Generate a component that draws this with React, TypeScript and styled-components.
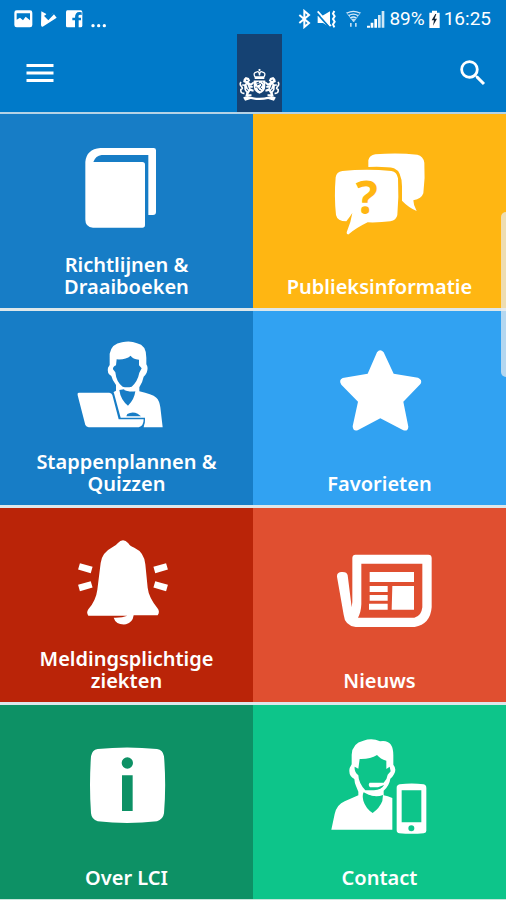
import React from "react";
import styled, { createGlobalStyle } from "styled-components";
import { MdMenu, MdSearch } from "react-icons/md";

const GlobalStyle = createGlobalStyle`
  * { box-sizing: border-box; }
  body { margin: 0; background: #dde7ea; }
`;

const Screen = styled.div`
  position: relative;
  min-height: 100vh;
  display: flex;
  flex-direction: column;
  font-family: "Noto Sans", "Open Sans", sans-serif;
  color: #fff;
`;

const TopArea = styled.header`
  background: #007ac9;
  border-bottom: 2px solid #b5d3e6;
`;

const StatusBar = styled.div`
  height: 34px;
  padding: 4px 15px 0 14px;
  display: flex;
  align-items: center;
  justify-content: space-between;
  font: 19px/24px Roboto, sans-serif;
`;

const StatusGroup = styled.div<{ $gap: number }>`
  display: flex;
  align-items: center;
  gap: ${(p) => p.$gap}px;
`;

const Toolbar = styled.div`
  display: grid;
  grid-template-columns: 1fr auto 1fr;
  padding: 0 16px 0 22px;
`;

const ToolButton = styled.button<{ $side: "start" | "end" }>`
  justify-self: ${(p) => p.$side};
  align-self: center;
  display: flex;
  padding: 0;
  border: 0;
  background: none;
  color: #fff;
  cursor: pointer;
`;

const Emblem = styled.div`
  display: flex;
  align-items: flex-end;
  padding: 0 2px 10px;
  height: 78px;
  margin-left: 6px;
  background: #154273;
`;

const Tiles = styled.main`
  flex: 1;
  display: grid;
  grid-template-columns: 1fr 1fr;
  grid-auto-rows: minmax(194px, 1fr);
  row-gap: 3px;
  border-bottom: 1px solid #c9e6dc;
`;

const TileButton = styled.button<{ $color: string }>`
  display: flex;
  flex-direction: column;
  align-items: center;
  justify-content: flex-end;
  padding: 26px 16px 10px;
  border: 0;
  background: ${(p) => p.$color};
  color: #fff;
  font: 600 20px/22px "Noto Sans", "Open Sans", sans-serif;
  cursor: pointer;
`;

const TileIcon = styled.svg`
  width: 120px;
  height: 104px;
  fill: currentColor;
  flex: none;
`;

const TileLabel = styled.span`
  display: flex;
  flex-direction: column;
  justify-content: flex-end;
  min-height: 54px;
  text-align: center;
  white-space: pre-line;
`;

const ScrollThumb = styled.div`
  position: absolute;
  top: 212px;
  right: 0;
  width: 5px;
  height: 165px;
  border-radius: 5px 0 0 5px;
  background: rgba(232, 236, 238, 0.72);
`;

const BLUE = "#177dc6";
const YELLOW = "#ffb612";
const SKY = "#31a2f2";
const RED = "#ba2408";
const ORANGE = "#e04f30";
const GREEN = "#0d9165";
const MINT = "#0dc58a";

const BookIcon = () => (
  <TileIcon viewBox="200 90 360 312">
    <path d="M300 114H460Q467 114 467 121V306Q467 315 458 315H444V135H304Q286 137 279 156H426Q434 156 434 164V345Q434 353 426 353H278Q255 351 255 329V156Q258 118 300 114Z" />
  </TileIcon>
);

const QuestionMark = styled.text`
  font: 700 138px "Noto Sans", sans-serif;
  fill: ${YELLOW};
`;

const ChatIcon = () => (
  <TileIcon viewBox="200 90 360 312">
    <path d="M345 171V151Q348 136 366 133Q430 127 492 134Q510 138 513 158Q516 205 510 250Q505 266 480 271Q480 286 490 303Q465 292 446 272V229Q445 184 422 175Q400 169 345 171Z" />
    <path d="M267 183Q340 175 414 183Q431 186 434 205Q437 260 432 315Q429 331 411 334Q380 338 343 337Q306 355 286 373Q279 374 280 367Q293 337 297 309Q290 320 279 334Q252 334 248 315Q242 260 247 202Q249 186 267 183Z" />
    <QuestionMark x="340" y="311" textAnchor="middle">?</QuestionMark>
  </TileIcon>
);

const LaptopPersonIcon = () => (
  <TileIcon viewBox="200 96 360 312">
    <path
      fillRule="evenodd"
      d="M328 180V146Q334 116 365 112Q390 106 410 115Q438 120 438 158V178Q445 188 439 203Q435 211 430 215Q427 231 417 247V259Q455 267 468 278Q477 286 480 307L487 367H430Q434 352 434 338H361L341 265Q337 261 347 257V240Q336 226 333 213Q319 205 323 188ZM349 163L347 181Q337 185 338 193L345 202Q348 232 367 245Q380 249 394 245Q412 229 417 203L424 190L416 181V164Q397 162 391 152Q376 165 349 163ZM357 255Q361 285 383 302Q402 284 405 259Q392 262 371 253ZM378 334H422L412 326Q396 318 381 327Z"
    />
    <path d="M370 249Q391 257 411 238L415 250Q394 265 373 256Z" />
    <path
      d="M235 263H327Q334 264 336 270L355 343H430Q430 363 415 367H265Q258 366 255 360L232 271Q230 264 235 263Z"
      stroke={BLUE}
      strokeWidth="7"
      paintOrder="stroke"
    />
  </TileIcon>
);

const StarIcon = () => (
  <TileIcon viewBox="200 96 360 312">
    <path d="M371 142Q380 129 391 142L421 206L494 218Q508 224 502 236L450 290L465 365Q464 380 450 376L381 340L313 376Q299 380 298 364L314 290L264 239Q255 226 268 219L343 206Z" />
  </TileIcon>
);

const BellIcon = () => (
  <TileIcon viewBox="200 102 360 312">
    <path d="M352 130Q368 111 384 130Q388 138 402 143Q432 157 435 193L442 263Q445 291 471 324Q480 335 472 346H400Q397 368 377 373Q347 376 340 353Q365 354 381 347H264Q257 338 264 328Q287 301 291 269L301 189Q305 158 336 142Q347 137 352 130Z" />
    <g fill="none" stroke="currentColor" strokeWidth="20">
      <path d="M236 199L274 210M236 264L274 253M500 199L462 210M500 264L462 253" />
    </g>
  </TileIcon>
);

const NewsIcon = () => (
  <TileIcon viewBox="200 102 360 312">
    <path
      fillRule="evenodd"
      d="M306 164H525Q535 164 535 174V322Q531 373 484 381H307Q274 376 271 344L251 230Q250 218 263 216Q281 214 283 226L295 322L297 306V173Q298 164 306 164ZM324 191V313Q323 337 314 353H483Q504 349 507 322V191Z"
    />
    <path d="M349 216H482V246H349ZM349 258H403V276H349ZM349 285H403V302H349ZM347 311H403V329H347ZM417 258H482V329H415Z" />
  </TileIcon>
);

const InfoIcon = () => (
  <TileIcon viewBox="200 108 360 312">
    <path
      fillRule="evenodd"
      d="M292 162Q380 153 470 162Q488 165 491 184Q498 270 491 355Q488 374 470 379Q380 389 292 379Q274 374 272 355Q266 270 272 184Q275 165 292 162ZM365 241H397V348H365ZM381 187A17 17 0 1 0 381 221A17 17 0 1 0 381 187Z"
    />
  </TileIcon>
);

const ContactIcon = () => (
  <TileIcon viewBox="200 108 360 312">
    <path
      fillRule="evenodd"
      d="M295 208V179Q297 144 330 137Q357 128 380 139Q420 132 420 181V209Q431 222 422 238Q416 249 411 251Q408 272 391 287V301Q403 303 417 309V404H234L244 357Q251 328 274 319L315 301V290L308 273Q304 266 303 252Q284 242 289 219ZM319 192L315 221L304 215Q302 230 315 241Q316 265 336 286H362Q385 285 392 270L374 277H350Q343 270 349 263H391Q402 251 403 239L412 229L409 215L399 222V197Q381 192 371 180Q351 193 319 192ZM331 292Q326 300 330 317Q337 340 358 354Q379 339 387 318L389 300Q367 308 343 298Z"
    />
    <path d="M343 290Q365 299 385 286L389 291Q367 308 343 297Z" />
    <path
      fillRule="evenodd"
      d="M439 268Q475 263 511 268Q519 270 519 279V407Q519 414 511 415Q475 418 438 415Q430 414 430 406V278Q430 270 439 268ZM445 286V382H504V286ZM474 391A9 9 0 1 0 474 409A9 9 0 1 0 474 391Z"
    />
  </TileIcon>
);

const NotificationIcons = () => (
  <svg width="94" height="20" viewBox="42 24 282 60" fill="#fff" aria-hidden="true">
    <path
      fillRule="evenodd"
      d="M50 28H90Q97 28 97 35V72Q97 79 90 79H50Q43 79 43 72V35Q43 28 50 28ZM50 37V56L60 50L69 58L77 47L90 58V37Z"
    />
    <path d="M124 31L139 39L135 46L145 54L159 36L170 50L128 77Q123 78 123 71Z" />
    <path d="M134 43L145 54L163 35" fill="none" stroke="#007ac9" strokeWidth="5" />
    <path
      fillRule="evenodd"
      d="M202 28H242Q247 28 247 34V74Q247 79 242 79H236V58H243V50H236Q233 39 245 42V34Q225 29 225 50H217V58H225V79H202Q198 79 198 74V34Q198 28 202 28Z"
    />
    <circle cx="279" cy="74" r="5" />
    <circle cx="296" cy="74" r="5" />
    <circle cx="313" cy="74" r="5" />
  </svg>
);

const ConnectionIcons = () => (
  <svg width="88" height="20" viewBox="128 24 264 60" fill="#fff" aria-hidden="true">
    <path d="M135 42L164 66L150 78V30L164 42L135 66" fill="none" stroke="#fff" strokeWidth="6" />
    <path d="M190 45H203L227 31V79L206 66H190Z" />
    <path d="M186 35L226 80" stroke="#007ac9" strokeWidth="5" />
    <path d="M190 31L230 75" stroke="#fff" strokeWidth="5" />
    <path d="M240 30L236 38L241 46L236 54L241 62L236 70L240 79" fill="none" stroke="#fff" strokeWidth="6" />
    <g fill="none" stroke="#d6eafa" strokeWidth="4">
      <path d="M278 36Q297 26 317 36M283 44Q297 35 311 44M288 51Q297 45 306 51" />
      <path d="M276 34L298 63L319 34" strokeWidth="2" />
    </g>
    <path d="M291 53H304L298 62ZM287 66H292V77H287ZM302 66H307V77H302Z" opacity=".75" />
    <path d="M338 74H347V80H338ZM349 65H357V80H349ZM360 54H368V80H360Z" />
    <path d="M371 42H379V80H371ZM382 30H390V80H382Z" opacity=".82" />
  </svg>
);

const BatteryIcon = () => (
  <svg width="11" height="18" viewBox="524 27 33 54" aria-hidden="true">
    <path d="M533 29H548V35H556V81H525V35H533Z" fill="#fff" />
    <path d="M543 39L532 58H539L536 74L548 53H541L546 39Z" fill="#102437" />
  </svg>
);

const Lion = () => (
  <>
    <path
      fill="#fff"
      stroke="none"
      d="M14 34L20 28L30 31L34 40L29 44L36 48L44 42L46 47L38 55L32 55L35 64L45 68L44 74L34 72L28 82H38V87H19L22 77L16 68L15 54L20 47L12 44Z"
    />
    <path d="M16 79Q3 80 5 67Q13 65 7 58Q0 52 5 43M19 54L9 53M31 59L42 59" strokeWidth="5" />
    <path d="M21 38L26 39M24 52L29 66M22 65L26 72" stroke="#154273" strokeWidth="3" />
  </>
);

const CoatOfArms = () => (
  <svg width="41" height="34" viewBox="0 0 126 106" fill="none" stroke="#fff" role="img" aria-label="Rijksoverheid">
    <g strokeWidth="4">
      <path d="M49 28Q42 15 53 13Q62 7 63 23Q64 7 73 13Q84 15 77 28ZM48 32H78" />
      <path d="M63 3V10M59 6H67" strokeWidth="3" />
    </g>
    <path d="M45 39H81V59Q80 73 63 80Q46 73 45 59Z" fill="#fff" stroke="none" />
    <path d="M53 47L60 44L57 53L66 48L71 53L65 60L71 66M57 61L61 69L67 71M72 44L75 47M52 58V62" stroke="#154273" strokeWidth="3" />
    <Lion />
    <g transform="translate(126 0) scale(-1 1)">
      <Lion />
    </g>
    <path d="M12 92Q23 84 34 89Q63 97 92 89Q103 84 114 92L108 102L90 97Q63 103 36 97L18 102Z" fill="#fff" stroke="none" />
  </svg>
);

const tiles = [
  { label: "Richtlijnen &\nDraaiboeken", color: BLUE, Icon: BookIcon },
  { label: "Publieksinformatie", color: YELLOW, Icon: ChatIcon },
  { label: "Stappenplannen &\nQuizzen", color: BLUE, Icon: LaptopPersonIcon },
  { label: "Favorieten", color: SKY, Icon: StarIcon },
  { label: "Meldingsplichtige\nziekten", color: RED, Icon: BellIcon },
  { label: "Nieuws", color: ORANGE, Icon: NewsIcon },
  { label: "Over LCI", color: GREEN, Icon: InfoIcon },
  { label: "Contact", color: MINT, Icon: ContactIcon },
];

export default function App() {
  return (
    <Screen>
      <GlobalStyle />
      <TopArea>
        <StatusBar>
          <NotificationIcons />
          <StatusGroup $gap={4}>
            <ConnectionIcons />
            <StatusGroup $gap={4}>
              <span>89%</span>
              <BatteryIcon />
            </StatusGroup>
            <span>16:25</span>
          </StatusGroup>
        </StatusBar>
        <Toolbar>
          <ToolButton $side="start" aria-label="Menu">
            <MdMenu size={36} />
          </ToolButton>
          <Emblem>
            <CoatOfArms />
          </Emblem>
          <ToolButton $side="end" aria-label="Zoeken">
            <MdSearch size={34} />
          </ToolButton>
        </Toolbar>
      </TopArea>
      <Tiles>
        {tiles.map(({ label, color, Icon }) => (
          <TileButton key={label} $color={color}>
            <Icon />
            <TileLabel>{label}</TileLabel>
          </TileButton>
        ))}
      </Tiles>
      <ScrollThumb />
    </Screen>
  );
}
